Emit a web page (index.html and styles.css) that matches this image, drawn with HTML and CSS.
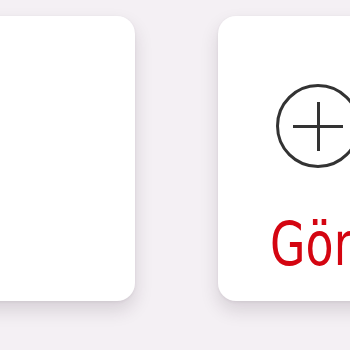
FILE: index.html
```html
<!DOCTYPE html>
<html lang="tr">
<head>
<meta charset="utf-8">
<link rel="stylesheet" href="styles.css">
</head>
<body>
<div class="row">
  <div class="card"></div>
  <div class="card card-action">
    <svg class="plus" width="84" height="84" viewBox="0 0 84 84" aria-hidden="true">
      <circle cx="42" cy="42" r="40.5" fill="none" stroke="#333" stroke-width="3"/>
      <path d="M17 42.5H67M42.5 18V67" stroke="#333" stroke-width="3" fill="none"/>
    </svg>
    <div class="label">Gönder</div>
  </div>
</div>
</body>
</html>
```
FILE: styles.css
```css
html, body {
  margin: 0;
  padding: 0;
  background: #f4f0f4;
  width: 350px;
  height: 350px;
  overflow: hidden;
}
.row {
  display: flex;
  gap: 83px;
  padding-top: 16px;
  margin-left: -65px;
}
.card {
  flex: 0 0 200px;
  height: 285px;
  background: #fff;
  border-radius: 18px;
  box-shadow: 0 9px 18px rgba(50, 30, 50, 0.15), 0 1px 3px rgba(50, 30, 50, 0.07);
  box-sizing: border-box;
}
.card-action {
  display: flex;
  flex-direction: column;
  align-items: center;
  padding-top: 68px;
  overflow: hidden;
}
.plus {
  display: block;
  flex: none;
}
.label {
  align-self: flex-start;
  margin-top: 46px;
  margin-left: 52px;
  font-family: "DejaVu Sans Condensed", "DejaVu Sans", sans-serif;
  font-size: 60px;
  line-height: 1;
  color: #d40511;
  white-space: nowrap;
  transform: scaleX(0.85);
  transform-origin: 0 0;
}
```
